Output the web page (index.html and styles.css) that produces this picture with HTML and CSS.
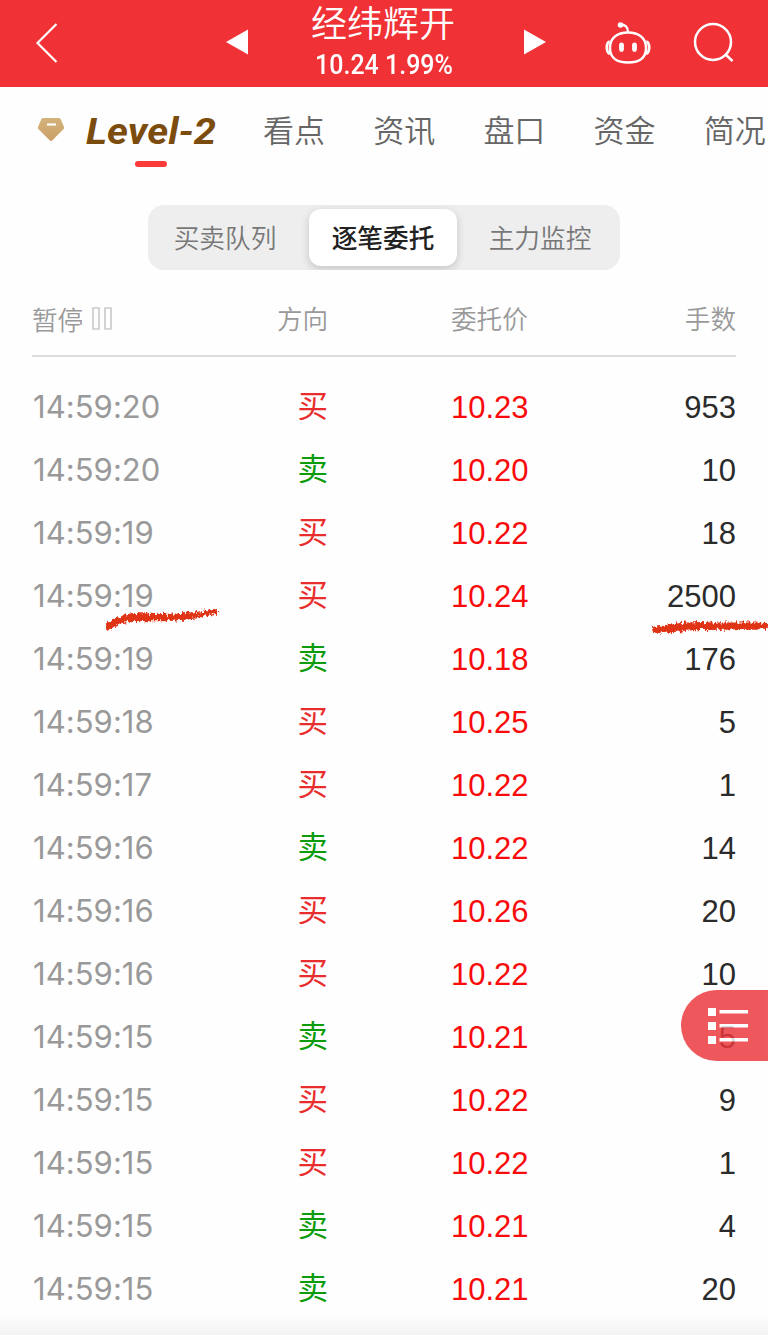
FILE: index.html
```html
<!DOCTYPE html>
<html lang="zh-CN">
<head>
<meta charset="utf-8">
<title>经纬辉开</title>
<link rel="stylesheet" href="styles.css">
</head>
<body>
<div class="screen">
  <header class="topbar">
    <svg class="back" width="24" height="42" viewBox="0 0 24 42"><path d="M21.500 2 2.500 21l19 19" fill="none" stroke="#fff" stroke-width="2.200"/></svg>
    <svg class="prev" width="22" height="26" viewBox="0 0 22 26"><path d="M22 .5v25L0 13z" fill="#fff"/></svg>
    <div class="stock">
      <div class="stock-name">经纬辉开</div>
      <div class="stock-price">10.24 1.99%</div>
    </div>
    <svg class="next" width="22" height="26" viewBox="0 0 22 26"><path d="M0 .5v25L22 13z" fill="#fff"/></svg>
    <svg class="robot" width="46" height="44" viewBox="0 0 46 44" fill="none" stroke="#fff" stroke-width="2.400">
      <path d="M23 11.500c11 0 18 5.500 18 15.500s-7 14.500-18 14.500S5 37 5 27s7-15.500 18-15.500z"/>
      <path d="M23 11c0-5-3-7.500-7.500-7.500"/>
      <circle cx="15.500" cy="4" r="2.800" fill="#fff" stroke="none"/>
      <path d="M4.800 20.500C1 21.500.8 31 4.800 33M41.200 20.500c3.800 1 4 10.500 0 12.500" stroke-width="2.800"/>
      <path d="M16.500 23.800v4.800M29.500 23.800v4.800" stroke-width="4.800" stroke-linecap="round"/>
    </svg>
    <svg class="search" width="42" height="42" viewBox="0 0 42 42" fill="none" stroke="#fff" stroke-width="2.500"><circle cx="20" cy="20" r="18"/><path d="m32 32 7.500 7"/></svg>
  </header>

  <nav class="tabs">
    <svg class="gem" width="28" height="24" viewBox="0 0 28 24">
      <defs><linearGradient id="gold" x1="0" y1="0" x2="0" y2="1"><stop offset="0" stop-color="#d4b27c"/><stop offset="1" stop-color="#caa066"/></linearGradient></defs>
      <path d="M6.500 0h15q1.500 0 2.200 1.300L27 9q.4 1-.4 1.900L15.200 22.500q-1.200 1.200-2.400 0L1.400 10.900Q.6 10 1 9L4.300 1.300Q5 0 6.500 0z" fill="url(#gold)"/>
      <path d="M10 6.500h9" stroke="#fff" stroke-width="2.200"/>
    </svg>
    <div class="tab level">
      <svg width="138" height="40" viewBox="0 0 138 40"><text class="level-text" x="1" y="33" textLength="130" lengthAdjust="spacingAndGlyphs">Level-2</text></svg>
      <i class="marker"></i>
    </div>
    <div class="tab">看点</div><div class="tab">资讯</div><div class="tab">盘口</div><div class="tab">资金</div><div class="tab">简况</div>
  </nav>

  <div class="segment">
    <div class="seg">买卖队列</div><div class="seg active">逐笔委托</div><div class="seg">主力监控</div>
  </div>

  <main class="orders">
    <div class="row head">
      <span class="pause">暂停<svg width="21" height="24" viewBox="0 0 21 24" fill="none" stroke="#ccc" stroke-width="1.700"><path d="M1 1h6v21H1zM13 1h6v21h-6z"/></svg></span>
      <span>方向</span><span>委托价</span><span>手数</span>
    </div>
    <div class="list">
      <div class="row"><time>14:59:20</time><b class="buy">买</b><em>10.23</em><span>953</span></div>
      <div class="row"><time>14:59:20</time><b class="sell">卖</b><em>10.20</em><span>10</span></div>
      <div class="row"><time>14:59:19</time><b class="buy">买</b><em>10.22</em><span>18</span></div>
      <div class="row marked"><time>14:59:19</time><b class="buy">买</b><em>10.24</em><span>2500</span>
        <svg class="strokes" width="768" height="40" viewBox="0 0 768 40">
          <defs><filter id="crayon" x="-5%" y="-80%" width="110%" height="260%"><feTurbulence type="fractalNoise" baseFrequency=".45 .25" numOctaves="2" seed="6" result="n"/><feDisplacementMap in="SourceGraphic" in2="n" scale="8" xChannelSelector="R" yChannelSelector="G"/><feGaussianBlur stdDeviation=".55"/></filter></defs>
          <g filter="url(#crayon)" fill="#df3517">
            <path d="M106 21c9-7 18-11 31-11 27 2 55 1 80-5l1 5c-23 8-54 9-81 8-11 0-20 4-30 10z"/>
            <path d="M652 24c16-2 30-5 48-5 24 1 44 0 70 1v6c-25-1-43 1-68 1-18 0-32 3-49 4z"/>
          </g>
        </svg>
      </div>
      <div class="row"><time>14:59:19</time><b class="sell">卖</b><em>10.18</em><span>176</span></div>
      <div class="row"><time>14:59:18</time><b class="buy">买</b><em>10.25</em><span>5</span></div>
      <div class="row"><time>14:59:17</time><b class="buy">买</b><em>10.22</em><span>1</span></div>
      <div class="row"><time>14:59:16</time><b class="sell">卖</b><em>10.22</em><span>14</span></div>
      <div class="row"><time>14:59:16</time><b class="buy">买</b><em>10.26</em><span>20</span></div>
      <div class="row"><time>14:59:16</time><b class="buy">买</b><em>10.22</em><span>10</span></div>
      <div class="row"><time>14:59:15</time><b class="sell">卖</b><em>10.21</em><span>5</span></div>
      <div class="row"><time>14:59:15</time><b class="buy">买</b><em>10.22</em><span>9</span></div>
      <div class="row"><time>14:59:15</time><b class="buy">买</b><em>10.22</em><span>1</span></div>
      <div class="row"><time>14:59:15</time><b class="sell">卖</b><em>10.21</em><span>4</span></div>
      <div class="row"><time>14:59:15</time><b class="sell">卖</b><em>10.21</em><span>20</span></div>
    </div>
  </main>
  <div class="fade"></div>
  <div class="float">
    <svg width="40" height="38" viewBox="0 0 40 38" fill="#fff"><path d="M0 1h8v8H0zM0 15h8v8H0zM0 29h8v8H0zM11.500 3H40v3.500H11.500zM11.500 17H40v3.500H11.500zM11.500 31H40v3.500H11.500z"/></svg>
  </div>
</div>
</body>
</html>
```
FILE: styles.css
```css
* { box-sizing: border-box; }
body { margin: 0; background: #fff; font-family: "Liberation Sans", "Noto Sans CJK SC", sans-serif; }
svg { display: block; flex: none; overflow: visible; }
.screen { position: relative; width: 768px; height: 1340px; overflow: hidden; background: #fefefe; }

.topbar { display: flex; align-items: flex-start; height: 87px; padding-left: 35px; background: #f03136; color: #fff; }
.back { margin-top: 22px; }
.prev { margin: 29px 0 0 167px; }
.stock { width: 146px; margin-left: 62px; text-align: center; white-space: nowrap; }
.stock-name { height: 46px; font: 350 36px/42px "Noto Sans CJK SC", sans-serif; }
.stock-price { height: 36px; font: 500 27px/38px Roboto, sans-serif; transform: scaleX(.925); margin: 0 -12px 0 -10px; }
.next { margin: 29px 0 0 68px; }
.robot { margin: 21px 0 0 59px; }
.search { margin: 22px 0 0 42px; }

.tabs { display: flex; align-items: flex-start; height: 118px; padding-left: 37px; white-space: nowrap; }
.gem { margin-top: 31px; }
.tab { width: 110.2px; flex: none; color: #666; font: 350 31px/84px "Noto Sans CJK SC", sans-serif; }
.level { width: 178px; margin-left: 20px; padding-top: 24px; line-height: 1; }
.level-text { font: italic 700 37px Roboto, sans-serif; fill: #7b4c0d; }
.marker { display: block; width: 32px; height: 6px; margin: 10px 0 0 50px; border-radius: 3px; background: #fb3b38; }

.segment { display: flex; width: 472px; height: 65px; margin: 0 auto; padding: 4px 0; border-radius: 16px; background: #eee; overflow: hidden; }
.seg { flex: none; width: 158px; height: 57px; padding-right: 4px; color: #777; text-align: center; font: 350 25.700px/55px "Noto Sans CJK SC", sans-serif; margin-right: 3px; }
.seg:last-child { width: 160px; margin: 0; padding: 0; }
.seg.active { width: 148px; padding: 0; border-radius: 12px; background: #fff; color: #222; font-weight: 500; box-shadow: 0 3px 9px rgba(30, 35, 50, .2); }

.orders { padding: 0 32px; }
.row { position: relative; display: grid; grid-template-columns: 245px 51px 123px 1fr; height: 63px; line-height: 65px; font-size: 31px; color: #2b2b2b; white-space: nowrap; }
.row > :nth-child(3) { margin-left: 123px; margin-right: -123px; }
.row > :nth-child(4) { text-align: right; }
.head { height: 87px; border-bottom: 2px solid #ddd; font: 350 25.600px/96px "Noto Sans CJK SC", sans-serif; color: #999; }
.pause { display: flex; align-items: center; gap: 9px; height: 97px; }
.list { padding-top: 18px; }
time { padding-left: 1px; font: 400 31px/63px Inter, sans-serif; letter-spacing: .05px; color: #999; }
b { text-align: right; font: 400 30.500px/58px "Noto Sans CJK SC", sans-serif; }
.buy { color: #e92d2d; }
.sell { color: #0b9b0b; }
em { font-style: normal; color: #f90b0b; }
.strokes { position: absolute; left: -32px; top: 39px; }

.fade { position: absolute; left: 0; bottom: 5px; width: 768px; height: 22px; background: linear-gradient(#fefefe, #f3f3f3); }
.float { position: absolute; right: 0; top: 990px; width: 87px; height: 71px; padding: 17px 0 0 27px; border-radius: 36px 0 0 36px; background: #eb373d; opacity: .83; }
```
